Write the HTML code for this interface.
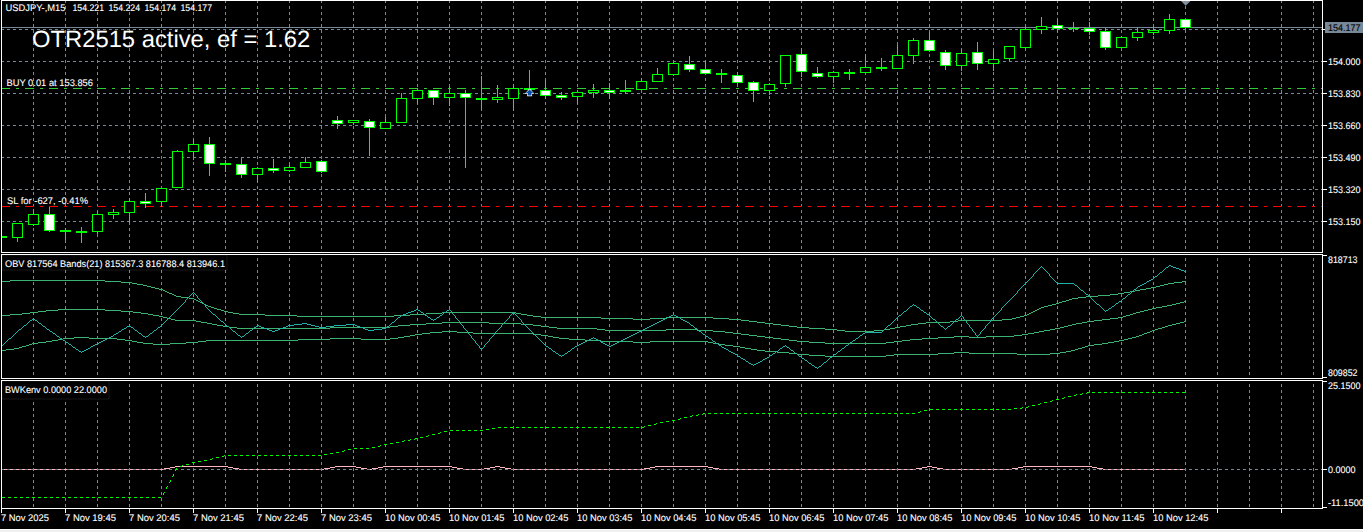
<!DOCTYPE html>
<html lang="en"><head><meta charset="utf-8"><title>USDJPY-,M15</title>
<style>
html,body{margin:0;padding:0;background:#000;overflow:hidden}
svg{display:block}
text{font-family:"Liberation Sans",Arial,sans-serif}
</style></head><body>
<svg width="1367" height="532" viewBox="0 0 1367 532" shape-rendering="crispEdges">
<rect x="0" y="0" width="1367" height="532" fill="#000"/>
<g id="grid-main">
<line x1="33.5" y1="0" x2="33.5" y2="252" stroke="#778899" stroke-dasharray="3 3" stroke-dashoffset="0"/>
<line x1="65.5" y1="0" x2="65.5" y2="252" stroke="#778899" stroke-dasharray="3 3" stroke-dashoffset="0"/>
<line x1="97.5" y1="0" x2="97.5" y2="252" stroke="#778899" stroke-dasharray="3 3" stroke-dashoffset="0"/>
<line x1="129.5" y1="0" x2="129.5" y2="252" stroke="#778899" stroke-dasharray="3 3" stroke-dashoffset="0"/>
<line x1="161.5" y1="0" x2="161.5" y2="252" stroke="#778899" stroke-dasharray="3 3" stroke-dashoffset="0"/>
<line x1="193.5" y1="0" x2="193.5" y2="252" stroke="#778899" stroke-dasharray="3 3" stroke-dashoffset="0"/>
<line x1="225.5" y1="0" x2="225.5" y2="252" stroke="#778899" stroke-dasharray="3 3" stroke-dashoffset="0"/>
<line x1="257.5" y1="0" x2="257.5" y2="252" stroke="#778899" stroke-dasharray="3 3" stroke-dashoffset="0"/>
<line x1="289.5" y1="0" x2="289.5" y2="252" stroke="#778899" stroke-dasharray="3 3" stroke-dashoffset="0"/>
<line x1="321.5" y1="0" x2="321.5" y2="252" stroke="#778899" stroke-dasharray="3 3" stroke-dashoffset="0"/>
<line x1="353.5" y1="0" x2="353.5" y2="252" stroke="#778899" stroke-dasharray="3 3" stroke-dashoffset="0"/>
<line x1="385.5" y1="0" x2="385.5" y2="252" stroke="#778899" stroke-dasharray="3 3" stroke-dashoffset="0"/>
<line x1="417.5" y1="0" x2="417.5" y2="252" stroke="#778899" stroke-dasharray="3 3" stroke-dashoffset="0"/>
<line x1="449.5" y1="0" x2="449.5" y2="252" stroke="#778899" stroke-dasharray="3 3" stroke-dashoffset="0"/>
<line x1="481.5" y1="0" x2="481.5" y2="252" stroke="#778899" stroke-dasharray="3 3" stroke-dashoffset="0"/>
<line x1="513.5" y1="0" x2="513.5" y2="252" stroke="#778899" stroke-dasharray="3 3" stroke-dashoffset="0"/>
<line x1="545.5" y1="0" x2="545.5" y2="252" stroke="#778899" stroke-dasharray="3 3" stroke-dashoffset="0"/>
<line x1="577.5" y1="0" x2="577.5" y2="252" stroke="#778899" stroke-dasharray="3 3" stroke-dashoffset="0"/>
<line x1="609.5" y1="0" x2="609.5" y2="252" stroke="#778899" stroke-dasharray="3 3" stroke-dashoffset="0"/>
<line x1="641.5" y1="0" x2="641.5" y2="252" stroke="#778899" stroke-dasharray="3 3" stroke-dashoffset="0"/>
<line x1="673.5" y1="0" x2="673.5" y2="252" stroke="#778899" stroke-dasharray="3 3" stroke-dashoffset="0"/>
<line x1="705.5" y1="0" x2="705.5" y2="252" stroke="#778899" stroke-dasharray="3 3" stroke-dashoffset="0"/>
<line x1="737.5" y1="0" x2="737.5" y2="252" stroke="#778899" stroke-dasharray="3 3" stroke-dashoffset="0"/>
<line x1="769.5" y1="0" x2="769.5" y2="252" stroke="#778899" stroke-dasharray="3 3" stroke-dashoffset="0"/>
<line x1="801.5" y1="0" x2="801.5" y2="252" stroke="#778899" stroke-dasharray="3 3" stroke-dashoffset="0"/>
<line x1="833.5" y1="0" x2="833.5" y2="252" stroke="#778899" stroke-dasharray="3 3" stroke-dashoffset="0"/>
<line x1="865.5" y1="0" x2="865.5" y2="252" stroke="#778899" stroke-dasharray="3 3" stroke-dashoffset="0"/>
<line x1="897.5" y1="0" x2="897.5" y2="252" stroke="#778899" stroke-dasharray="3 3" stroke-dashoffset="0"/>
<line x1="929.5" y1="0" x2="929.5" y2="252" stroke="#778899" stroke-dasharray="3 3" stroke-dashoffset="0"/>
<line x1="961.5" y1="0" x2="961.5" y2="252" stroke="#778899" stroke-dasharray="3 3" stroke-dashoffset="0"/>
<line x1="993.5" y1="0" x2="993.5" y2="252" stroke="#778899" stroke-dasharray="3 3" stroke-dashoffset="0"/>
<line x1="1025.5" y1="0" x2="1025.5" y2="252" stroke="#778899" stroke-dasharray="3 3" stroke-dashoffset="0"/>
<line x1="1057.5" y1="0" x2="1057.5" y2="252" stroke="#778899" stroke-dasharray="3 3" stroke-dashoffset="0"/>
<line x1="1089.5" y1="0" x2="1089.5" y2="252" stroke="#778899" stroke-dasharray="3 3" stroke-dashoffset="0"/>
<line x1="1121.5" y1="0" x2="1121.5" y2="252" stroke="#778899" stroke-dasharray="3 3" stroke-dashoffset="0"/>
<line x1="1153.5" y1="0" x2="1153.5" y2="252" stroke="#778899" stroke-dasharray="3 3" stroke-dashoffset="0"/>
<line x1="1185.5" y1="0" x2="1185.5" y2="252" stroke="#778899" stroke-dasharray="3 3" stroke-dashoffset="0"/>
<line x1="1217.5" y1="0" x2="1217.5" y2="252" stroke="#778899" stroke-dasharray="3 3" stroke-dashoffset="0"/>
<line x1="1249.5" y1="0" x2="1249.5" y2="252" stroke="#778899" stroke-dasharray="3 3" stroke-dashoffset="0"/>
<line x1="1281.5" y1="0" x2="1281.5" y2="252" stroke="#778899" stroke-dasharray="3 3" stroke-dashoffset="0"/>
<line x1="1313.5" y1="0" x2="1313.5" y2="252" stroke="#778899" stroke-dasharray="3 3" stroke-dashoffset="0"/>
<line x1="1" y1="29.5" x2="1322" y2="29.5" stroke="#778899" stroke-dasharray="3 3" stroke-dashoffset="0"/>
<line x1="1" y1="61.5" x2="1322" y2="61.5" stroke="#778899" stroke-dasharray="3 3" stroke-dashoffset="0"/>
<line x1="1" y1="93.5" x2="1322" y2="93.5" stroke="#778899" stroke-dasharray="3 3" stroke-dashoffset="0"/>
<line x1="1" y1="125.5" x2="1322" y2="125.5" stroke="#778899" stroke-dasharray="3 3" stroke-dashoffset="0"/>
<line x1="1" y1="157.5" x2="1322" y2="157.5" stroke="#778899" stroke-dasharray="3 3" stroke-dashoffset="0"/>
<line x1="1" y1="189.5" x2="1322" y2="189.5" stroke="#778899" stroke-dasharray="3 3" stroke-dashoffset="0"/>
<line x1="1" y1="221.5" x2="1322" y2="221.5" stroke="#778899" stroke-dasharray="3 3" stroke-dashoffset="0"/>
</g>
<rect x="2" y="27" width="1320" height="1" fill="#778899"/>
<line x1="1" y1="88.5" x2="1322" y2="88.5" stroke="#32cd32" stroke-dasharray="9 6 3 6" stroke-dashoffset="0"/>
<line x1="1" y1="206.5" x2="1322" y2="206.5" stroke="#ff0000" stroke-dasharray="9 6 3 6" stroke-dashoffset="0"/>
<g id="candles">
<rect x="2" y="236" width="5" height="2" fill="#00ff00"/>
<rect x="17" y="223" width="1" height="19" fill="#00ff00"/>
<rect x="12" y="223" width="11" height="15" fill="#00ff00"/>
<rect x="13" y="224" width="9" height="13" fill="#000"/>
<rect x="33" y="209" width="1" height="17" fill="#00ff00"/>
<rect x="28" y="214" width="11" height="11" fill="#00ff00"/>
<rect x="29" y="215" width="9" height="9" fill="#000"/>
<rect x="49" y="207" width="1" height="25" fill="#00ff00"/>
<rect x="44" y="214" width="11" height="17" fill="#00ff00"/>
<rect x="45" y="215" width="9" height="15" fill="#fff"/>
<rect x="65" y="228" width="1" height="12" fill="#00ff00"/>
<rect x="60" y="230" width="11" height="2" fill="#00ff00"/>
<rect x="81" y="227" width="1" height="16" fill="#00ff00"/>
<rect x="76" y="231" width="11" height="2" fill="#00ff00"/>
<rect x="97" y="211" width="1" height="23" fill="#00ff00"/>
<rect x="92" y="214" width="11" height="18" fill="#00ff00"/>
<rect x="93" y="215" width="9" height="16" fill="#000"/>
<rect x="113" y="209" width="1" height="10" fill="#00ff00"/>
<rect x="108" y="212" width="11" height="3" fill="#00ff00"/>
<rect x="109" y="213" width="9" height="1" fill="#000"/>
<rect x="129" y="198" width="1" height="25" fill="#00ff00"/>
<rect x="124" y="201" width="11" height="12" fill="#00ff00"/>
<rect x="125" y="202" width="9" height="10" fill="#000"/>
<rect x="145" y="193" width="1" height="15" fill="#00ff00"/>
<rect x="140" y="201" width="11" height="3" fill="#00ff00"/>
<rect x="141" y="202" width="9" height="1" fill="#fff"/>
<rect x="161" y="188" width="1" height="19" fill="#00ff00"/>
<rect x="156" y="188" width="11" height="14" fill="#00ff00"/>
<rect x="157" y="189" width="9" height="12" fill="#000"/>
<rect x="177" y="150" width="1" height="38" fill="#00ff00"/>
<rect x="172" y="151" width="11" height="37" fill="#00ff00"/>
<rect x="173" y="152" width="9" height="35" fill="#000"/>
<rect x="193" y="139" width="1" height="21" fill="#00ff00"/>
<rect x="188" y="144" width="11" height="8" fill="#00ff00"/>
<rect x="189" y="145" width="9" height="6" fill="#000"/>
<rect x="209" y="137" width="1" height="39" fill="#00ff00"/>
<rect x="204" y="144" width="11" height="20" fill="#00ff00"/>
<rect x="205" y="145" width="9" height="18" fill="#fff"/>
<rect x="225" y="160" width="1" height="12" fill="#00ff00"/>
<rect x="220" y="163" width="11" height="2" fill="#00ff00"/>
<rect x="241" y="158" width="1" height="20" fill="#00ff00"/>
<rect x="236" y="164" width="11" height="11" fill="#00ff00"/>
<rect x="237" y="165" width="9" height="9" fill="#fff"/>
<rect x="257" y="167" width="1" height="15" fill="#00ff00"/>
<rect x="252" y="168" width="11" height="7" fill="#00ff00"/>
<rect x="253" y="169" width="9" height="5" fill="#000"/>
<rect x="273" y="159" width="1" height="14" fill="#00ff00"/>
<rect x="268" y="168" width="11" height="3" fill="#00ff00"/>
<rect x="269" y="169" width="9" height="1" fill="#fff"/>
<rect x="289" y="165" width="1" height="7" fill="#00ff00"/>
<rect x="284" y="167" width="11" height="4" fill="#00ff00"/>
<rect x="285" y="168" width="9" height="2" fill="#000"/>
<rect x="305" y="157" width="1" height="11" fill="#00ff00"/>
<rect x="300" y="162" width="11" height="6" fill="#00ff00"/>
<rect x="301" y="163" width="9" height="4" fill="#000"/>
<rect x="321" y="160" width="1" height="13" fill="#00ff00"/>
<rect x="316" y="161" width="11" height="11" fill="#00ff00"/>
<rect x="317" y="162" width="9" height="9" fill="#fff"/>
<rect x="337" y="116" width="1" height="13" fill="#00ff00"/>
<rect x="332" y="120" width="11" height="4" fill="#00ff00"/>
<rect x="333" y="121" width="9" height="2" fill="#fff"/>
<rect x="353" y="120" width="1" height="5" fill="#00ff00"/>
<rect x="348" y="120" width="11" height="3" fill="#00ff00"/>
<rect x="349" y="121" width="9" height="1" fill="#000"/>
<rect x="369" y="119" width="1" height="37" fill="#00ff00"/>
<rect x="364" y="121" width="11" height="7" fill="#00ff00"/>
<rect x="365" y="122" width="9" height="5" fill="#fff"/>
<rect x="385" y="117" width="1" height="12" fill="#00ff00"/>
<rect x="380" y="122" width="11" height="7" fill="#00ff00"/>
<rect x="381" y="123" width="9" height="5" fill="#000"/>
<rect x="401" y="93" width="1" height="30" fill="#00ff00"/>
<rect x="396" y="98" width="11" height="25" fill="#00ff00"/>
<rect x="397" y="99" width="9" height="23" fill="#000"/>
<rect x="417" y="89" width="1" height="15" fill="#00ff00"/>
<rect x="412" y="90" width="11" height="9" fill="#00ff00"/>
<rect x="413" y="91" width="9" height="7" fill="#000"/>
<rect x="433" y="90" width="1" height="15" fill="#00ff00"/>
<rect x="428" y="90" width="11" height="8" fill="#00ff00"/>
<rect x="429" y="91" width="9" height="6" fill="#fff"/>
<rect x="449" y="86" width="1" height="20" fill="#00ff00"/>
<rect x="444" y="93" width="11" height="5" fill="#00ff00"/>
<rect x="445" y="94" width="9" height="3" fill="#000"/>
<rect x="465" y="90" width="1" height="78" fill="#00ff00"/>
<rect x="460" y="93" width="11" height="5" fill="#00ff00"/>
<rect x="461" y="94" width="9" height="3" fill="#fff"/>
<rect x="481" y="76" width="1" height="33" fill="#00ff00"/>
<rect x="476" y="98" width="11" height="2" fill="#00ff00"/>
<rect x="497" y="85" width="1" height="18" fill="#00ff00"/>
<rect x="492" y="97" width="11" height="3" fill="#00ff00"/>
<rect x="493" y="98" width="9" height="1" fill="#000"/>
<rect x="513" y="84" width="1" height="27" fill="#00ff00"/>
<rect x="508" y="88" width="11" height="11" fill="#00ff00"/>
<rect x="509" y="89" width="9" height="9" fill="#000"/>
<rect x="529" y="70" width="1" height="20" fill="#00ff00"/>
<rect x="524" y="88" width="11" height="2" fill="#00ff00"/>
<rect x="545" y="80" width="1" height="19" fill="#00ff00"/>
<rect x="540" y="90" width="11" height="6" fill="#00ff00"/>
<rect x="541" y="91" width="9" height="4" fill="#fff"/>
<rect x="561" y="92" width="1" height="8" fill="#00ff00"/>
<rect x="556" y="95" width="11" height="3" fill="#00ff00"/>
<rect x="557" y="96" width="9" height="1" fill="#fff"/>
<rect x="577" y="90" width="1" height="14" fill="#00ff00"/>
<rect x="572" y="92" width="11" height="5" fill="#00ff00"/>
<rect x="573" y="93" width="9" height="3" fill="#000"/>
<rect x="593" y="84" width="1" height="14" fill="#00ff00"/>
<rect x="588" y="90" width="11" height="3" fill="#00ff00"/>
<rect x="589" y="91" width="9" height="1" fill="#000"/>
<rect x="609" y="83" width="1" height="16" fill="#00ff00"/>
<rect x="604" y="90" width="11" height="3" fill="#00ff00"/>
<rect x="605" y="91" width="9" height="1" fill="#fff"/>
<rect x="625" y="80" width="1" height="14" fill="#00ff00"/>
<rect x="620" y="90" width="11" height="2" fill="#00ff00"/>
<rect x="641" y="78" width="1" height="12" fill="#00ff00"/>
<rect x="636" y="81" width="11" height="9" fill="#00ff00"/>
<rect x="637" y="82" width="9" height="7" fill="#000"/>
<rect x="657" y="68" width="1" height="14" fill="#00ff00"/>
<rect x="652" y="74" width="11" height="8" fill="#00ff00"/>
<rect x="653" y="75" width="9" height="6" fill="#000"/>
<rect x="673" y="62" width="1" height="14" fill="#00ff00"/>
<rect x="668" y="63" width="11" height="12" fill="#00ff00"/>
<rect x="669" y="64" width="9" height="10" fill="#000"/>
<rect x="689" y="56" width="1" height="16" fill="#00ff00"/>
<rect x="684" y="64" width="11" height="6" fill="#00ff00"/>
<rect x="685" y="65" width="9" height="4" fill="#fff"/>
<rect x="705" y="61" width="1" height="13" fill="#00ff00"/>
<rect x="700" y="69" width="11" height="5" fill="#00ff00"/>
<rect x="701" y="70" width="9" height="3" fill="#fff"/>
<rect x="721" y="69" width="1" height="14" fill="#00ff00"/>
<rect x="716" y="73" width="11" height="2" fill="#00ff00"/>
<rect x="737" y="72" width="1" height="12" fill="#00ff00"/>
<rect x="732" y="75" width="11" height="8" fill="#00ff00"/>
<rect x="733" y="76" width="9" height="6" fill="#fff"/>
<rect x="753" y="81" width="1" height="21" fill="#00ff00"/>
<rect x="748" y="82" width="11" height="9" fill="#00ff00"/>
<rect x="749" y="83" width="9" height="7" fill="#fff"/>
<rect x="769" y="83" width="1" height="12" fill="#00ff00"/>
<rect x="764" y="84" width="11" height="7" fill="#00ff00"/>
<rect x="765" y="85" width="9" height="5" fill="#000"/>
<rect x="785" y="55" width="1" height="32" fill="#00ff00"/>
<rect x="780" y="55" width="11" height="29" fill="#00ff00"/>
<rect x="781" y="56" width="9" height="27" fill="#000"/>
<rect x="801" y="48" width="1" height="29" fill="#00ff00"/>
<rect x="796" y="54" width="11" height="18" fill="#00ff00"/>
<rect x="797" y="55" width="9" height="16" fill="#fff"/>
<rect x="817" y="67" width="1" height="11" fill="#00ff00"/>
<rect x="812" y="73" width="11" height="4" fill="#00ff00"/>
<rect x="813" y="74" width="9" height="2" fill="#fff"/>
<rect x="833" y="71" width="1" height="12" fill="#00ff00"/>
<rect x="828" y="72" width="11" height="5" fill="#00ff00"/>
<rect x="829" y="73" width="9" height="3" fill="#000"/>
<rect x="849" y="69" width="1" height="11" fill="#00ff00"/>
<rect x="844" y="72" width="11" height="2" fill="#00ff00"/>
<rect x="865" y="54" width="1" height="19" fill="#00ff00"/>
<rect x="860" y="67" width="11" height="6" fill="#00ff00"/>
<rect x="861" y="68" width="9" height="4" fill="#000"/>
<rect x="881" y="58" width="1" height="13" fill="#00ff00"/>
<rect x="876" y="67" width="11" height="2" fill="#00ff00"/>
<rect x="897" y="45" width="1" height="24" fill="#00ff00"/>
<rect x="892" y="55" width="11" height="14" fill="#00ff00"/>
<rect x="893" y="56" width="9" height="12" fill="#000"/>
<rect x="913" y="38" width="1" height="26" fill="#00ff00"/>
<rect x="908" y="40" width="11" height="16" fill="#00ff00"/>
<rect x="909" y="41" width="9" height="14" fill="#000"/>
<rect x="929" y="32" width="1" height="20" fill="#00ff00"/>
<rect x="924" y="40" width="11" height="11" fill="#00ff00"/>
<rect x="925" y="41" width="9" height="9" fill="#fff"/>
<rect x="945" y="50" width="1" height="20" fill="#00ff00"/>
<rect x="940" y="52" width="11" height="14" fill="#00ff00"/>
<rect x="941" y="53" width="9" height="12" fill="#fff"/>
<rect x="961" y="49" width="1" height="22" fill="#00ff00"/>
<rect x="956" y="53" width="11" height="13" fill="#00ff00"/>
<rect x="957" y="54" width="9" height="11" fill="#000"/>
<rect x="977" y="42" width="1" height="28" fill="#00ff00"/>
<rect x="972" y="52" width="11" height="12" fill="#00ff00"/>
<rect x="973" y="53" width="9" height="10" fill="#fff"/>
<rect x="993" y="51" width="1" height="20" fill="#00ff00"/>
<rect x="988" y="59" width="11" height="5" fill="#00ff00"/>
<rect x="989" y="60" width="9" height="3" fill="#000"/>
<rect x="1009" y="46" width="1" height="15" fill="#00ff00"/>
<rect x="1004" y="46" width="11" height="13" fill="#00ff00"/>
<rect x="1005" y="47" width="9" height="11" fill="#000"/>
<rect x="1025" y="27" width="1" height="22" fill="#00ff00"/>
<rect x="1020" y="29" width="11" height="19" fill="#00ff00"/>
<rect x="1021" y="30" width="9" height="17" fill="#000"/>
<rect x="1041" y="17" width="1" height="17" fill="#00ff00"/>
<rect x="1036" y="26" width="11" height="4" fill="#00ff00"/>
<rect x="1037" y="27" width="9" height="2" fill="#000"/>
<rect x="1057" y="19" width="1" height="13" fill="#00ff00"/>
<rect x="1052" y="25" width="11" height="4" fill="#00ff00"/>
<rect x="1053" y="26" width="9" height="2" fill="#fff"/>
<rect x="1073" y="22" width="1" height="10" fill="#00ff00"/>
<rect x="1068" y="28" width="11" height="1" fill="#00ff00"/>
<rect x="1089" y="22" width="1" height="13" fill="#00ff00"/>
<rect x="1084" y="28" width="11" height="4" fill="#00ff00"/>
<rect x="1085" y="29" width="9" height="2" fill="#fff"/>
<rect x="1105" y="28" width="1" height="22" fill="#00ff00"/>
<rect x="1100" y="31" width="11" height="17" fill="#00ff00"/>
<rect x="1101" y="32" width="9" height="15" fill="#fff"/>
<rect x="1121" y="36" width="1" height="12" fill="#00ff00"/>
<rect x="1116" y="37" width="11" height="11" fill="#00ff00"/>
<rect x="1117" y="38" width="9" height="9" fill="#000"/>
<rect x="1137" y="28" width="1" height="13" fill="#00ff00"/>
<rect x="1132" y="32" width="11" height="6" fill="#00ff00"/>
<rect x="1133" y="33" width="9" height="4" fill="#000"/>
<rect x="1153" y="27" width="1" height="8" fill="#00ff00"/>
<rect x="1148" y="30" width="11" height="3" fill="#00ff00"/>
<rect x="1149" y="31" width="9" height="1" fill="#000"/>
<rect x="1169" y="14" width="1" height="20" fill="#00ff00"/>
<rect x="1164" y="19" width="11" height="12" fill="#00ff00"/>
<rect x="1165" y="20" width="9" height="10" fill="#000"/>
<rect x="1185" y="19" width="1" height="10" fill="#00ff00"/>
<rect x="1180" y="19" width="11" height="9" fill="#00ff00"/>
<rect x="1181" y="20" width="9" height="7" fill="#fff"/>
</g>
<g id="arrow">
<path d="M529.6 88.2 L534.4 93.7 L532.1 93.7 L532.1 96.3 L527.1 96.3 L527.1 93.7 L524.8 93.7 Z" fill="#fff" shape-rendering="auto"/>
<path d="M529.6 89.6 L533.3 93 L531.5 93 L531.5 95.4 L527.7 95.4 L527.7 93 L525.9 93 Z" fill="#0a50a8" shape-rendering="auto"/>
</g>
<path d="M1181 1 L1190.5 1 L1185.7 5.8 Z" fill="#8390a0" shape-rendering="auto"/>
<g id="grid-obv">
<line x1="33.5" y1="270" x2="33.5" y2="378" stroke="#778899" stroke-dasharray="3 3" stroke-dashoffset="0"/>
<line x1="65.5" y1="270" x2="65.5" y2="378" stroke="#778899" stroke-dasharray="3 3" stroke-dashoffset="0"/>
<line x1="97.5" y1="270" x2="97.5" y2="378" stroke="#778899" stroke-dasharray="3 3" stroke-dashoffset="0"/>
<line x1="129.5" y1="270" x2="129.5" y2="378" stroke="#778899" stroke-dasharray="3 3" stroke-dashoffset="0"/>
<line x1="161.5" y1="270" x2="161.5" y2="378" stroke="#778899" stroke-dasharray="3 3" stroke-dashoffset="0"/>
<line x1="193.5" y1="270" x2="193.5" y2="378" stroke="#778899" stroke-dasharray="3 3" stroke-dashoffset="0"/>
<line x1="225.5" y1="270" x2="225.5" y2="378" stroke="#778899" stroke-dasharray="3 3" stroke-dashoffset="0"/>
<line x1="257.5" y1="258" x2="257.5" y2="378" stroke="#778899" stroke-dasharray="3 3" stroke-dashoffset="0"/>
<line x1="289.5" y1="258" x2="289.5" y2="378" stroke="#778899" stroke-dasharray="3 3" stroke-dashoffset="0"/>
<line x1="321.5" y1="258" x2="321.5" y2="378" stroke="#778899" stroke-dasharray="3 3" stroke-dashoffset="0"/>
<line x1="353.5" y1="258" x2="353.5" y2="378" stroke="#778899" stroke-dasharray="3 3" stroke-dashoffset="0"/>
<line x1="385.5" y1="258" x2="385.5" y2="378" stroke="#778899" stroke-dasharray="3 3" stroke-dashoffset="0"/>
<line x1="417.5" y1="258" x2="417.5" y2="378" stroke="#778899" stroke-dasharray="3 3" stroke-dashoffset="0"/>
<line x1="449.5" y1="258" x2="449.5" y2="378" stroke="#778899" stroke-dasharray="3 3" stroke-dashoffset="0"/>
<line x1="481.5" y1="258" x2="481.5" y2="378" stroke="#778899" stroke-dasharray="3 3" stroke-dashoffset="0"/>
<line x1="513.5" y1="258" x2="513.5" y2="378" stroke="#778899" stroke-dasharray="3 3" stroke-dashoffset="0"/>
<line x1="545.5" y1="258" x2="545.5" y2="378" stroke="#778899" stroke-dasharray="3 3" stroke-dashoffset="0"/>
<line x1="577.5" y1="258" x2="577.5" y2="378" stroke="#778899" stroke-dasharray="3 3" stroke-dashoffset="0"/>
<line x1="609.5" y1="258" x2="609.5" y2="378" stroke="#778899" stroke-dasharray="3 3" stroke-dashoffset="0"/>
<line x1="641.5" y1="258" x2="641.5" y2="378" stroke="#778899" stroke-dasharray="3 3" stroke-dashoffset="0"/>
<line x1="673.5" y1="258" x2="673.5" y2="378" stroke="#778899" stroke-dasharray="3 3" stroke-dashoffset="0"/>
<line x1="705.5" y1="258" x2="705.5" y2="378" stroke="#778899" stroke-dasharray="3 3" stroke-dashoffset="0"/>
<line x1="737.5" y1="258" x2="737.5" y2="378" stroke="#778899" stroke-dasharray="3 3" stroke-dashoffset="0"/>
<line x1="769.5" y1="258" x2="769.5" y2="378" stroke="#778899" stroke-dasharray="3 3" stroke-dashoffset="0"/>
<line x1="801.5" y1="258" x2="801.5" y2="378" stroke="#778899" stroke-dasharray="3 3" stroke-dashoffset="0"/>
<line x1="833.5" y1="258" x2="833.5" y2="378" stroke="#778899" stroke-dasharray="3 3" stroke-dashoffset="0"/>
<line x1="865.5" y1="258" x2="865.5" y2="378" stroke="#778899" stroke-dasharray="3 3" stroke-dashoffset="0"/>
<line x1="897.5" y1="258" x2="897.5" y2="378" stroke="#778899" stroke-dasharray="3 3" stroke-dashoffset="0"/>
<line x1="929.5" y1="258" x2="929.5" y2="378" stroke="#778899" stroke-dasharray="3 3" stroke-dashoffset="0"/>
<line x1="961.5" y1="258" x2="961.5" y2="378" stroke="#778899" stroke-dasharray="3 3" stroke-dashoffset="0"/>
<line x1="993.5" y1="258" x2="993.5" y2="378" stroke="#778899" stroke-dasharray="3 3" stroke-dashoffset="0"/>
<line x1="1025.5" y1="258" x2="1025.5" y2="378" stroke="#778899" stroke-dasharray="3 3" stroke-dashoffset="0"/>
<line x1="1057.5" y1="258" x2="1057.5" y2="378" stroke="#778899" stroke-dasharray="3 3" stroke-dashoffset="0"/>
<line x1="1089.5" y1="258" x2="1089.5" y2="378" stroke="#778899" stroke-dasharray="3 3" stroke-dashoffset="0"/>
<line x1="1121.5" y1="258" x2="1121.5" y2="378" stroke="#778899" stroke-dasharray="3 3" stroke-dashoffset="0"/>
<line x1="1153.5" y1="258" x2="1153.5" y2="378" stroke="#778899" stroke-dasharray="3 3" stroke-dashoffset="0"/>
<line x1="1185.5" y1="258" x2="1185.5" y2="378" stroke="#778899" stroke-dasharray="3 3" stroke-dashoffset="0"/>
<line x1="1217.5" y1="258" x2="1217.5" y2="378" stroke="#778899" stroke-dasharray="3 3" stroke-dashoffset="0"/>
<line x1="1249.5" y1="258" x2="1249.5" y2="378" stroke="#778899" stroke-dasharray="3 3" stroke-dashoffset="0"/>
<line x1="1281.5" y1="258" x2="1281.5" y2="378" stroke="#778899" stroke-dasharray="3 3" stroke-dashoffset="0"/>
<line x1="1313.5" y1="258" x2="1313.5" y2="378" stroke="#778899" stroke-dasharray="3 3" stroke-dashoffset="0"/>
</g>
<g id="obv">
<path d="M2 281.5h8M10 280.5h95M105 281.5h16M121 282.5h11M132 283.5h5M137 284.5h6M143 285.5h4M147 286.5h4M151 287.5h4M155 288.5h4M159 289.5h4M163 290.5h2M165 291.5h2M167 292.5h2M169 293.5h3M172 294.5h2M174 295.5h2M176 296.5h5M181 297.5h8M189 298.5h5M194 299.5h2M196 300.5h2M198 301.5h2M200 302.5h2M202 303.5h2M204 304.5h2M206 305.5h2M208 306.5h3M211 307.5h3M214 308.5h3M217 309.5h4M221 310.5h3M224 311.5h4M228 312.5h5M233 313.5h6M239 314.5h26M265 315.5h32M297 316.5h97M394 315.5h16M410 314.5h16M426 313.5h16M442 312.5h74M516 313.5h5M521 314.5h6M527 315.5h6M533 316.5h8M541 317.5h60M601 318.5h32M633 319.5h17M650 318.5h16M666 317.5h47M713 318.5h16M729 319.5h12M741 320.5h8M749 321.5h8M757 322.5h8M765 323.5h8M773 324.5h8M781 325.5h8M789 326.5h8M797 327.5h12M809 328.5h16M825 329.5h12M837 330.5h8M845 331.5h29M874 330.5h10M884 329.5h6M890 328.5h5M895 327.5h5M900 326.5h6M906 325.5h5M911 324.5h7M918 323.5h8M926 322.5h24M950 321.5h8M958 320.5h44M1002 319.5h10M1012 318.5h4M1016 317.5h4M1020 316.5h4M1024 315.5h3M1027 314.5h2M1029 313.5h2M1031 312.5h2M1033 311.5h2M1035 310.5h2M1037 309.5h2M1039 308.5h2M1041 307.5h3M1044 306.5h4M1048 305.5h4M1052 304.5h4M1056 303.5h3M1059 302.5h3M1062 301.5h4M1066 300.5h3M1069 299.5h3M1072 298.5h6M1078 297.5h8M1086 296.5h12M1098 295.5h12M1110 294.5h8M1118 293.5h6M1124 292.5h6M1130 291.5h5M1135 290.5h5M1140 289.5h6M1146 288.5h5M1151 287.5h5M1156 286.5h4M1160 285.5h4M1164 284.5h4M1168 283.5h6M1174 282.5h8M1182 281.5h4" fill="none" stroke="#3cb371" stroke-width="1"/>
<path d="M2 315.5h8M10 314.5h12M22 313.5h8M30 312.5h8M38 311.5h8M46 310.5h12M58 309.5h47M105 310.5h16M121 311.5h12M133 312.5h8M141 313.5h7M148 314.5h5M153 315.5h6M159 316.5h4M163 317.5h4M167 318.5h4M171 319.5h4M175 320.5h21M196 321.5h5M201 322.5h6M207 323.5h5M212 324.5h5M217 325.5h6M223 326.5h6M229 327.5h8M237 328.5h93M330 327.5h60M390 326.5h8M398 325.5h12M410 324.5h16M426 323.5h16M442 322.5h47M489 323.5h32M521 324.5h12M533 325.5h8M541 326.5h8M549 327.5h8M557 328.5h40M597 329.5h8M605 330.5h61M666 329.5h31M697 330.5h16M713 331.5h12M725 332.5h8M733 333.5h8M741 334.5h8M749 335.5h8M757 336.5h8M765 337.5h8M773 338.5h8M781 339.5h8M789 340.5h8M797 341.5h12M809 342.5h16M825 343.5h61M886 342.5h8M894 341.5h8M902 340.5h8M910 339.5h12M922 338.5h16M938 337.5h16M954 336.5h15M969 337.5h17M986 336.5h28M1014 335.5h8M1022 334.5h6M1028 333.5h6M1034 332.5h5M1039 331.5h5M1044 330.5h6M1050 329.5h5M1055 328.5h5M1060 327.5h4M1064 326.5h4M1068 325.5h4M1072 324.5h4M1076 323.5h6M1082 322.5h5M1087 321.5h7M1094 320.5h8M1102 319.5h8M1110 318.5h8M1118 317.5h5M1123 316.5h3M1126 315.5h4M1130 314.5h3M1133 313.5h3M1136 312.5h4M1140 311.5h4M1144 310.5h4M1148 309.5h4M1152 308.5h4M1156 307.5h6M1162 306.5h5M1167 305.5h5M1172 304.5h4M1176 303.5h4M1180 302.5h4M1184 301.5h2" fill="none" stroke="#3cb371" stroke-width="1"/>
<path d="M2 350.5h4M6 349.5h8M14 348.5h5M19 347.5h3M22 346.5h4M26 345.5h3M29 344.5h3M32 343.5h6M38 342.5h8M46 341.5h6M52 340.5h6M58 339.5h5M63 338.5h11M74 337.5h15M89 338.5h28M117 339.5h8M125 340.5h7M132 341.5h5M137 342.5h6M143 343.5h10M153 344.5h17M170 343.5h16M186 342.5h12M198 341.5h8M206 340.5h92M298 339.5h32M330 338.5h31M361 339.5h29M390 338.5h8M398 337.5h6M404 336.5h6M410 335.5h5M415 334.5h7M422 333.5h8M430 332.5h12M442 331.5h15M457 332.5h16M473 333.5h60M533 334.5h8M541 335.5h7M548 336.5h5M553 337.5h6M559 338.5h10M569 339.5h16M585 340.5h16M601 341.5h32M633 342.5h17M650 341.5h58M708 342.5h5M713 343.5h6M719 344.5h6M725 345.5h8M733 346.5h7M740 347.5h5M745 348.5h6M751 349.5h6M757 350.5h8M765 351.5h12M777 352.5h12M789 353.5h8M797 354.5h12M809 355.5h16M825 356.5h61M886 355.5h8M894 354.5h44M938 353.5h16M954 352.5h15M969 353.5h48M1017 354.5h33M1050 353.5h10M1060 352.5h6M1066 351.5h5M1071 350.5h4M1075 349.5h3M1078 348.5h4M1082 347.5h3M1085 346.5h3M1088 345.5h6M1094 344.5h8M1102 343.5h6M1108 342.5h6M1114 341.5h5M1119 340.5h5M1124 339.5h4M1128 338.5h4M1132 337.5h4M1136 336.5h3M1139 335.5h3M1142 334.5h2M1144 333.5h3M1147 332.5h3M1150 331.5h2M1152 330.5h3M1155 329.5h3M1158 328.5h4M1162 327.5h3M1165 326.5h3M1168 325.5h4M1172 324.5h4M1176 323.5h4M1180 322.5h4M1184 321.5h2" fill="none" stroke="#3cb371" stroke-width="1"/>
<path d="M2.5 345v1M3.5 344v1M4.5 343v1M5.5 342v1M6.5 341v1M7.5 340v1M8.5 339v1M9 338.5h2M11.5 337v1M12.5 336v1M13.5 335v1M14.5 334v1M15.5 333v1M16.5 332v1M17.5 331v1M18.5 330v1M19 329.5h2M21.5 328v1M22.5 327v1M23.5 326v1M24 325.5h2M26.5 324v1M27.5 323v1M28.5 322v1M29.5 321v1M30 320.5h2M32.5 319v1M33.5 318v1M34.5 319v1M35 320.5h2M37.5 321v1M38.5 322v1M39 323.5h2M41.5 324v1M42.5 325v1M43 326.5h2M45.5 327v1M46.5 328v1M47 329.5h2M49.5 330v1M50 331.5h2M52.5 332v1M53 333.5h2M55.5 334v1M56.5 335v1M57 336.5h2M59.5 337v1M60 338.5h2M62.5 339v1M63 340.5h2M65.5 341v1M66 342.5h2M68.5 343v1M69 344.5h2M71.5 345v1M72.5 346v1M73 347.5h2M75.5 348v1M76 349.5h2M78.5 350v1M79 351.5h2M81.5 352v1M82 351.5h2M84 350.5h2M86 349.5h2M88 348.5h2M90.5 347v1M91 346.5h2M93 345.5h2M95 344.5h2M97 343.5h2M99 342.5h2M101 341.5h2M103 340.5h2M105 339.5h2M107 338.5h2M109 337.5h2M111 336.5h2M113.5 335v1M114 334.5h2M116 333.5h2M118.5 332v1M119 331.5h2M121.5 330v1M122 329.5h2M124 328.5h2M126.5 327v1M127 326.5h2M129.5 325v1M130.5 326v1M131 327.5h2M133.5 328v1M134.5 329v1M135 330.5h2M137.5 331v1M138.5 332v1M139 333.5h2M141.5 334v1M142.5 335v1M143 336.5h2M145.5 337v1M146 336.5h2M148.5 335v1M149.5 334v1M150 333.5h2M152.5 332v1M153.5 331v1M154 330.5h2M156.5 329v1M157.5 328v1M158 327.5h2M160.5 326v1M161.5 325v1M162.5 324v1M163.5 323v1M164.5 322v1M165.5 321v1M166.5 320v1M167.5 319v1M168.5 318v1M169.5 317v1M170.5 316v1M171.5 315v1M172.5 314v1M173.5 313v1M174.5 312v1M175.5 311v1M176.5 310v1M177.5 309v1M178.5 308v1M179.5 307v1M180.5 306v1M181.5 305v1M182.5 304v1M183.5 303v1M184.5 302v1M185.5 300v2M186.5 299v1M187.5 298v1M188.5 297v1M189.5 296v1M190.5 295v1M191.5 294v1M192.5 293v1M193.5 292v1M194.5 293v1M195.5 294v1M196.5 295v1M197.5 296v2M198.5 298v1M199.5 299v1M200.5 300v1M201.5 301v1M202.5 302v1M203.5 303v1M204.5 304v1M205.5 305v2M206.5 307v1M207.5 308v1M208.5 309v1M209.5 310v1M210.5 311v1M211.5 312v1M212.5 313v1M213 314.5h2M215.5 315v1M216.5 316v1M217.5 317v1M218.5 318v1M219.5 319v1M220.5 320v1M221 321.5h2M223.5 322v1M224.5 323v1M225.5 324v1M226.5 325v1M227 326.5h2M229.5 327v1M230.5 328v1M231.5 329v1M232.5 330v1M233 331.5h2M235.5 332v1M236.5 333v1M237.5 334v1M238 335.5h2M240.5 336v1M241.5 337v1M242 336.5h2M244.5 335v1M245.5 334v1M246 333.5h2M248.5 332v1M249.5 331v1M250 330.5h2M252.5 329v1M253.5 328v1M254 327.5h2M256.5 326v1M257 325.5h2M259 326.5h2M261 327.5h3M264 328.5h3M267 329.5h2M269 330.5h3M272 331.5h3M275 330.5h3M278 329.5h2M280 328.5h3M283 327.5h3M286 326.5h2M288 325.5h6M294 324.5h8M302 323.5h5M307 324.5h4M311 325.5h4M315 326.5h4M319 327.5h7M326 326.5h8M334 325.5h12M346 324.5h9M355 325.5h2M357 326.5h3M360 327.5h3M363 328.5h2M365 329.5h3M368 330.5h6M374 329.5h8M382 328.5h4M386.5 327v1M387 326.5h2M389.5 325v1M390.5 324v1M391.5 323v1M392 322.5h2M394.5 321v1M395.5 320v1M396.5 319v1M397.5 318v1M398 317.5h2M400.5 316v1M401 315.5h2M403 314.5h3M406 313.5h2M408 312.5h3M411 311.5h3M414 310.5h2M416 309.5h2M418 310.5h2M420.5 311v1M421 312.5h2M423.5 313v1M424.5 314v1M425 315.5h2M427.5 316v1M428 317.5h2M430.5 318v1M431 319.5h2M433.5 320v1M434 319.5h2M436.5 318v1M437 317.5h2M439.5 316v1M440 315.5h2M442.5 314v1M443.5 313v1M444 312.5h2M446.5 311v1M447 310.5h2M449.5 309v1M450.5 310v1M451.5 311v2M452.5 313v1M453.5 314v1M454.5 315v1M455.5 316v2M456.5 318v1M457.5 319v1M458.5 320v1M459.5 321v2M460.5 323v1M461.5 324v1M462.5 325v1M463.5 326v2M464.5 328v1M465.5 329v1M466.5 330v1M467.5 331v2M468.5 333v1M469.5 334v1M470.5 335v1M471.5 336v2M472.5 338v1M473.5 339v1M474.5 340v1M475.5 341v2M476.5 343v1M477.5 344v1M478.5 345v1M479.5 346v2M480.5 348v1M481.5 349v1M482.5 348v1M483.5 347v1M484.5 345v2M485.5 344v1M486.5 343v1M487.5 342v1M488.5 341v1M489.5 339v2M490.5 338v1M491.5 337v1M492.5 336v1M493.5 335v1M494.5 333v2M495.5 332v1M496.5 331v1M497.5 330v1M498.5 329v1M499.5 328v1M500.5 327v1M501.5 325v2M502.5 324v1M503.5 323v1M504.5 322v1M505.5 321v1M506.5 320v1M507.5 319v1M508.5 318v1M509.5 316v2M510.5 315v1M511.5 314v1M512.5 313v1M513.5 312v1M514.5 313v1M515.5 314v1M516.5 315v1M517.5 316v1M518.5 317v1M519.5 318v1M520.5 319v1M521.5 320v2M522.5 322v1M523.5 323v1M524.5 324v1M525.5 325v1M526.5 326v1M527.5 327v1M528.5 328v1M529.5 329v1M530.5 330v1M531.5 331v1M532.5 332v1M533.5 333v1M534.5 334v1M535.5 335v1M536.5 336v1M537.5 337v1M538.5 338v1M539.5 339v1M540.5 340v1M541.5 341v1M542.5 342v1M543.5 343v1M544.5 344v1M545.5 345v1M546 346.5h2M548.5 347v1M549 348.5h2M551.5 349v1M552.5 350v1M553 351.5h2M555.5 352v1M556 353.5h2M558.5 354v1M559 355.5h2M561.5 356v1M562 355.5h2M564.5 354v1M565 353.5h2M567.5 352v1M568 351.5h2M570.5 350v1M571.5 349v1M572 348.5h2M574.5 347v1M575 346.5h2M577 345.5h2M579 344.5h2M581 343.5h2M583 342.5h2M585 341.5h2M587 340.5h2M589 339.5h2M591 338.5h2M593.5 337v1M594 338.5h2M596 339.5h2M598 340.5h2M600.5 341v1M601 342.5h2M603 343.5h2M605 344.5h2M607 345.5h2M609 346.5h2M611 345.5h2M613 344.5h2M615 343.5h2M617 342.5h2M619 341.5h2M621 340.5h2M623 339.5h2M625 338.5h2M627 337.5h2M629 336.5h2M631 335.5h2M633 334.5h2M635 333.5h2M637 332.5h2M639 331.5h2M641 330.5h2M643 329.5h2M645 328.5h2M647 327.5h2M649 326.5h2M651 325.5h2M653 324.5h2M655 323.5h2M657 322.5h2M659 321.5h2M661 320.5h2M663 319.5h2M665 318.5h2M667 317.5h2M669 316.5h2M671 315.5h2M673.5 314v1M674 315.5h2M676 316.5h2M678 317.5h2M680.5 318v1M681 319.5h2M683 320.5h2M685 321.5h2M687 322.5h2M689.5 323v1M690.5 324v1M691 325.5h2M693.5 326v1M694.5 327v1M695 328.5h2M697.5 329v1M698.5 330v1M699 331.5h2M701.5 332v1M702.5 333v1M703 334.5h2M705.5 335v1M706 336.5h2M708.5 337v1M709 338.5h2M711.5 339v1M712.5 340v1M713 341.5h2M715.5 342v1M716 343.5h2M718.5 344v1M719 345.5h2M721.5 346v1M722 347.5h2M724 348.5h2M726 349.5h2M728.5 350v1M729 351.5h2M731 352.5h2M733 353.5h2M735 354.5h2M737.5 355v1M738 356.5h2M740.5 357v1M741 358.5h2M743 359.5h2M745.5 360v1M746 361.5h2M748.5 362v1M749 363.5h2M751 364.5h2M753.5 365v1M754 364.5h2M756 363.5h2M758 362.5h2M760 361.5h2M762.5 360v1M763 359.5h2M765 358.5h2M767 357.5h2M769.5 356v1M770 355.5h2M772.5 354v1M773 353.5h2M775.5 352v1M776 351.5h2M778.5 350v1M779.5 349v1M780 348.5h2M782.5 347v1M783 346.5h2M785.5 345v1M786.5 346v1M787 347.5h2M789.5 348v1M790.5 349v1M791 350.5h2M793.5 351v1M794.5 352v1M795 353.5h2M797.5 354v1M798.5 355v1M799 356.5h2M801.5 357v1M802 358.5h2M804.5 359v1M805 360.5h2M807.5 361v1M808.5 362v1M809 363.5h2M811.5 364v1M812 365.5h2M814.5 366v1M815 367.5h2M817.5 368v1M818.5 367v1M819 366.5h2M821.5 365v1M822.5 364v1M823.5 363v1M824 362.5h2M826.5 361v1M827.5 360v1M828.5 359v1M829.5 358v1M830 357.5h2M832.5 356v1M833.5 355v1M834 354.5h2M836.5 353v1M837.5 352v1M838 351.5h2M840.5 350v1M841.5 349v1M842 348.5h2M844.5 347v1M845.5 346v1M846 345.5h2M848.5 344v1M849.5 343v1M850 342.5h2M852.5 341v1M853 340.5h2M855.5 339v1M856 338.5h2M858.5 337v1M859.5 336v1M860 335.5h2M862.5 334v1M863 333.5h2M865 332.5h17M882.5 331v1M883.5 330v1M884.5 329v1M885.5 328v1M886.5 327v1M887.5 326v1M888 325.5h2M890.5 324v1M891.5 323v1M892.5 322v1M893.5 321v1M894.5 320v1M895.5 319v1M896.5 318v1M897.5 317v1M898.5 316v1M899 315.5h2M901.5 314v1M902.5 313v1M903.5 312v1M904 311.5h2M906.5 310v1M907.5 309v1M908.5 308v1M909.5 307v1M910 306.5h2M912.5 305v1M913.5 304v1M914 305.5h2M916.5 306v1M917 307.5h2M919.5 308v1M920.5 309v1M921 310.5h2M923.5 311v1M924 312.5h2M926.5 313v1M927 314.5h2M929.5 315v1M930.5 316v1M931.5 317v1M932.5 318v1M933 319.5h2M935.5 320v1M936.5 321v1M937.5 322v1M938.5 323v1M939.5 324v1M940.5 325v1M941 326.5h2M943.5 327v1M944.5 328v1M945.5 329v1M946.5 328v1M947.5 327v1M948 326.5h2M950.5 325v1M951.5 324v1M952.5 323v1M953.5 322v1M954.5 321v1M955.5 320v1M956 319.5h2M958.5 318v1M959.5 317v1M960.5 316v1M961.5 315v1M962.5 316v1M963.5 317v2M964.5 319v1M965.5 320v1M966.5 321v2M967.5 323v1M968.5 324v1M969.5 325v2M970.5 327v1M971.5 328v1M972.5 329v2M973.5 331v1M974.5 332v1M975.5 333v2M976.5 335v1M977.5 336v1M978.5 335v1M979.5 334v1M980.5 332v2M981.5 331v1M982.5 330v1M983.5 329v1M984.5 328v1M985.5 326v2M986.5 325v1M987.5 324v1M988.5 323v1M989.5 322v1M990.5 320v2M991.5 319v1M992.5 318v1M993.5 317v1M994.5 316v1M995.5 315v1M996.5 314v1M997.5 313v1M998.5 312v1M999.5 311v1M1000.5 310v1M1001.5 308v2M1002.5 307v1M1003.5 306v1M1004.5 305v1M1005.5 304v1M1006.5 303v1M1007.5 302v1M1008.5 301v1M1009.5 300v1M1010.5 299v1M1011.5 298v1M1012.5 297v1M1013.5 296v1M1014.5 295v1M1015.5 294v1M1016.5 293v1M1017.5 291v2M1018.5 290v1M1019.5 289v1M1020.5 288v1M1021.5 287v1M1022.5 286v1M1023.5 285v1M1024.5 284v1M1025.5 283v1M1026.5 282v1M1027.5 281v1M1028.5 280v1M1029.5 279v1M1030.5 278v1M1031.5 277v1M1032.5 276v1M1033.5 274v2M1034.5 273v1M1035.5 272v1M1036.5 271v1M1037.5 270v1M1038.5 269v1M1039.5 268v1M1040.5 267v1M1041.5 266v1M1042.5 267v1M1043.5 268v1M1044.5 269v1M1045.5 270v1M1046.5 271v1M1047.5 272v1M1048.5 273v1M1049.5 274v2M1050.5 276v1M1051.5 277v1M1052.5 278v1M1053.5 279v1M1054.5 280v1M1055.5 281v1M1056.5 282v1M1057 283.5h17M1074.5 284v1M1075 285.5h2M1077.5 286v1M1078.5 287v1M1079.5 288v1M1080.5 289v1M1081 290.5h2M1083.5 291v1M1084.5 292v1M1085.5 293v1M1086 294.5h2M1088.5 295v1M1089.5 296v1M1090.5 297v1M1091.5 298v1M1092.5 299v1M1093.5 300v1M1094.5 301v1M1095.5 302v1M1096.5 303v1M1097 304.5h2M1099.5 305v1M1100.5 306v1M1101.5 307v1M1102.5 308v1M1103.5 309v1M1104.5 310v1M1105.5 311v1M1106 310.5h2M1108.5 309v1M1109 308.5h2M1111.5 307v1M1112 306.5h2M1114.5 305v1M1115.5 304v1M1116 303.5h2M1118.5 302v1M1119 301.5h2M1121.5 300v1M1122.5 299v1M1123 298.5h2M1125.5 297v1M1126.5 296v1M1127.5 295v1M1128 294.5h2M1130.5 293v1M1131.5 292v1M1132.5 291v1M1133.5 290v1M1134 289.5h2M1136.5 288v1M1137.5 287v1M1138 286.5h2M1140 285.5h2M1142 284.5h2M1144 283.5h2M1146.5 282v1M1147 281.5h2M1149 280.5h2M1151 279.5h2M1153.5 278v1M1154.5 277v1M1155 276.5h2M1157.5 275v1M1158.5 274v1M1159.5 273v1M1160 272.5h2M1162.5 271v1M1163.5 270v1M1164.5 269v1M1165.5 268v1M1166 267.5h2M1168.5 266v1M1169 265.5h2M1171 266.5h2M1173 267.5h3M1176 268.5h3M1179 269.5h2M1181 270.5h3M1184 271.5h2" fill="none" stroke="#20b2aa" stroke-width="1"/>
</g>
<g id="grid-bwk">
<line x1="33.5" y1="399" x2="33.5" y2="508" stroke="#778899" stroke-dasharray="3 3" stroke-dashoffset="3"/>
<line x1="65.5" y1="399" x2="65.5" y2="508" stroke="#778899" stroke-dasharray="3 3" stroke-dashoffset="3"/>
<line x1="97.5" y1="399" x2="97.5" y2="508" stroke="#778899" stroke-dasharray="3 3" stroke-dashoffset="3"/>
<line x1="129.5" y1="384" x2="129.5" y2="508" stroke="#778899" stroke-dasharray="3 3" stroke-dashoffset="0"/>
<line x1="161.5" y1="384" x2="161.5" y2="508" stroke="#778899" stroke-dasharray="3 3" stroke-dashoffset="0"/>
<line x1="193.5" y1="384" x2="193.5" y2="508" stroke="#778899" stroke-dasharray="3 3" stroke-dashoffset="0"/>
<line x1="225.5" y1="384" x2="225.5" y2="508" stroke="#778899" stroke-dasharray="3 3" stroke-dashoffset="0"/>
<line x1="257.5" y1="384" x2="257.5" y2="508" stroke="#778899" stroke-dasharray="3 3" stroke-dashoffset="0"/>
<line x1="289.5" y1="384" x2="289.5" y2="508" stroke="#778899" stroke-dasharray="3 3" stroke-dashoffset="0"/>
<line x1="321.5" y1="384" x2="321.5" y2="508" stroke="#778899" stroke-dasharray="3 3" stroke-dashoffset="0"/>
<line x1="353.5" y1="384" x2="353.5" y2="508" stroke="#778899" stroke-dasharray="3 3" stroke-dashoffset="0"/>
<line x1="385.5" y1="384" x2="385.5" y2="508" stroke="#778899" stroke-dasharray="3 3" stroke-dashoffset="0"/>
<line x1="417.5" y1="384" x2="417.5" y2="508" stroke="#778899" stroke-dasharray="3 3" stroke-dashoffset="0"/>
<line x1="449.5" y1="384" x2="449.5" y2="508" stroke="#778899" stroke-dasharray="3 3" stroke-dashoffset="0"/>
<line x1="481.5" y1="384" x2="481.5" y2="508" stroke="#778899" stroke-dasharray="3 3" stroke-dashoffset="0"/>
<line x1="513.5" y1="384" x2="513.5" y2="508" stroke="#778899" stroke-dasharray="3 3" stroke-dashoffset="0"/>
<line x1="545.5" y1="384" x2="545.5" y2="508" stroke="#778899" stroke-dasharray="3 3" stroke-dashoffset="0"/>
<line x1="577.5" y1="384" x2="577.5" y2="508" stroke="#778899" stroke-dasharray="3 3" stroke-dashoffset="0"/>
<line x1="609.5" y1="384" x2="609.5" y2="508" stroke="#778899" stroke-dasharray="3 3" stroke-dashoffset="0"/>
<line x1="641.5" y1="384" x2="641.5" y2="508" stroke="#778899" stroke-dasharray="3 3" stroke-dashoffset="0"/>
<line x1="673.5" y1="384" x2="673.5" y2="508" stroke="#778899" stroke-dasharray="3 3" stroke-dashoffset="0"/>
<line x1="705.5" y1="384" x2="705.5" y2="508" stroke="#778899" stroke-dasharray="3 3" stroke-dashoffset="0"/>
<line x1="737.5" y1="384" x2="737.5" y2="508" stroke="#778899" stroke-dasharray="3 3" stroke-dashoffset="0"/>
<line x1="769.5" y1="384" x2="769.5" y2="508" stroke="#778899" stroke-dasharray="3 3" stroke-dashoffset="0"/>
<line x1="801.5" y1="384" x2="801.5" y2="508" stroke="#778899" stroke-dasharray="3 3" stroke-dashoffset="0"/>
<line x1="833.5" y1="384" x2="833.5" y2="508" stroke="#778899" stroke-dasharray="3 3" stroke-dashoffset="0"/>
<line x1="865.5" y1="384" x2="865.5" y2="508" stroke="#778899" stroke-dasharray="3 3" stroke-dashoffset="0"/>
<line x1="897.5" y1="384" x2="897.5" y2="508" stroke="#778899" stroke-dasharray="3 3" stroke-dashoffset="0"/>
<line x1="929.5" y1="384" x2="929.5" y2="508" stroke="#778899" stroke-dasharray="3 3" stroke-dashoffset="0"/>
<line x1="961.5" y1="384" x2="961.5" y2="508" stroke="#778899" stroke-dasharray="3 3" stroke-dashoffset="0"/>
<line x1="993.5" y1="384" x2="993.5" y2="508" stroke="#778899" stroke-dasharray="3 3" stroke-dashoffset="0"/>
<line x1="1025.5" y1="384" x2="1025.5" y2="508" stroke="#778899" stroke-dasharray="3 3" stroke-dashoffset="0"/>
<line x1="1057.5" y1="384" x2="1057.5" y2="508" stroke="#778899" stroke-dasharray="3 3" stroke-dashoffset="0"/>
<line x1="1089.5" y1="384" x2="1089.5" y2="508" stroke="#778899" stroke-dasharray="3 3" stroke-dashoffset="0"/>
<line x1="1121.5" y1="384" x2="1121.5" y2="508" stroke="#778899" stroke-dasharray="3 3" stroke-dashoffset="0"/>
<line x1="1153.5" y1="384" x2="1153.5" y2="508" stroke="#778899" stroke-dasharray="3 3" stroke-dashoffset="0"/>
<line x1="1185.5" y1="384" x2="1185.5" y2="508" stroke="#778899" stroke-dasharray="3 3" stroke-dashoffset="0"/>
<line x1="1217.5" y1="384" x2="1217.5" y2="508" stroke="#778899" stroke-dasharray="3 3" stroke-dashoffset="0"/>
<line x1="1249.5" y1="384" x2="1249.5" y2="508" stroke="#778899" stroke-dasharray="3 3" stroke-dashoffset="0"/>
<line x1="1281.5" y1="384" x2="1281.5" y2="508" stroke="#778899" stroke-dasharray="3 3" stroke-dashoffset="0"/>
<line x1="1313.5" y1="384" x2="1313.5" y2="508" stroke="#778899" stroke-dasharray="3 3" stroke-dashoffset="0"/>
</g>
<g id="bwk">
<path d="M2 469.5h162M164 468.5h6M170 467.5h5M175 466.5h53M228 467.5h5M233 468.5h6M239 469.5h85M324 468.5h6M330 467.5h5M335 466.5h21M356 467.5h5M361 468.5h6M367 469.5h5M372 468.5h6M378 467.5h5M383 466.5h69M452 467.5h5M457 468.5h6M463 469.5h21M484 468.5h6M490 467.5h5M495 466.5h5M500 467.5h5M505 468.5h6M511 469.5h133M644 468.5h6M650 467.5h5M655 466.5h53M708 467.5h5M713 468.5h6M719 469.5h197M916 468.5h6M922 467.5h5M927 466.5h5M932 467.5h5M937 468.5h6M943 469.5h69M1012 468.5h6M1018 467.5h5M1023 466.5h69M1092 467.5h5M1097 468.5h6M1103 469.5h83" fill="none" stroke="#ffb6c1" stroke-width="1"/>
<line x1="1" y1="469.5" x2="1322" y2="469.5" stroke="#778899" stroke-dasharray="3 3" stroke-dashoffset="0"/>
<path d="M2 497.5h3M8 497.5h3M14 497.5h3M20 497.5h3M26 497.5h3M32 497.5h3M38 497.5h3M44 497.5h3M50 497.5h3M56 497.5h3M62 497.5h3M68 497.5h3M74 497.5h3M80 497.5h3M86 497.5h3M92 497.5h3M98 497.5h3M104 497.5h3M110 497.5h3M116 497.5h3M122 497.5h3M128 497.5h3M134 497.5h3M140 497.5h3M146 497.5h3M152 497.5h3M158 497.5h3M163.5 493v2M164.5 492v1M166.5 487v2M167.5 486v1M169.5 482v1M170.5 480v2M172.5 476v1M173.5 474v2M175.5 470v1M176.5 468v2M180 466.5h2M182.5 465v1M186 464.5h3M192 462.5h3M198 461.5h3M204 460.5h3M210 459.5h2M212.5 458v1M216 457.5h3M222 456.5h2M224.5 455v1M228 455.5h3M234 455.5h3M240 455.5h3M246 455.5h3M252 455.5h3M258 455.5h3M264 455.5h3M270 455.5h3M276 455.5h3M282 455.5h3M288 455.5h3M294 455.5h3M300 455.5h3M306 455.5h3M312 455.5h3M318 455.5h3M324 454.5h3M330 453.5h3M336 452.5h3M342 451.5h2M344.5 450v1M348 449.5h3M354 448.5h3M360 448.5h3M366 448.5h3M372 447.5h3M378 446.5h2M380.5 445v1M384 444.5h3M390 443.5h3M396 442.5h3M402 441.5h2M404.5 440v1M408 440.5h2M410.5 439v1M414.5 439v1M415 438.5h2M420 437.5h3M426 436.5h2M428.5 435v1M432 434.5h3M438 433.5h2M440.5 432v1M444 431.5h3M450 430.5h3M456 430.5h3M462 430.5h3M468 430.5h3M474 430.5h3M480 430.5h3M486 429.5h3M492 428.5h3M498 427.5h3M504 427.5h3M510 427.5h3M516 427.5h3M522 427.5h3M528 427.5h3M534 427.5h3M540 427.5h3M546 427.5h3M552 427.5h3M558 427.5h3M564 427.5h3M570 427.5h3M576 427.5h3M582 427.5h3M588 427.5h3M594 427.5h3M600 427.5h3M606 427.5h3M612 427.5h3M618 427.5h3M624 427.5h3M630 427.5h3M636 427.5h3M642 427.5h2M644.5 426v1M648 425.5h3M654 424.5h2M656.5 423v1M660 422.5h3M666 421.5h3M672 420.5h3M678 419.5h2M680.5 418v1M684 417.5h3M690 416.5h2M692.5 415v1M696 415.5h2M698.5 414v1M702.5 414v1M703 413.5h2M708 413.5h3M714 413.5h3M720 413.5h3M726 413.5h3M732 413.5h3M738 413.5h3M744 413.5h3M750 413.5h3M756 413.5h3M762 413.5h3M768 413.5h3M774 413.5h3M780 413.5h3M786 413.5h3M792 413.5h3M798 413.5h3M804 413.5h3M810 413.5h3M816 413.5h3M822 413.5h3M828 413.5h3M834 413.5h3M840 413.5h3M846 413.5h3M852 413.5h3M858 413.5h3M864 413.5h3M870 413.5h3M876 413.5h3M882 413.5h3M888 413.5h3M894 413.5h3M900 413.5h3M906 413.5h3M912 413.5h3M918 412.5h2M920.5 411v1M924 410.5h3M930 409.5h3M936 409.5h3M942 409.5h3M948 409.5h3M954 409.5h3M960 409.5h3M966 409.5h3M972 409.5h3M978 409.5h3M984 409.5h3M990 409.5h3M996 409.5h3M1002 409.5h3M1008 409.5h3M1014 408.5h3M1020 408.5h2M1022.5 407v1M1026 407.5h2M1028.5 406v1M1032 405.5h3M1038 404.5h2M1040.5 403v1M1044 402.5h3M1050 401.5h2M1052.5 400v1M1056 399.5h3M1062 398.5h2M1064.5 397v1M1068 396.5h3M1074 395.5h2M1076.5 394v1M1080 394.5h2M1082.5 393v1M1086.5 393v1M1087 392.5h2M1092 392.5h3M1098 392.5h3M1104 392.5h3M1110 392.5h3M1116 392.5h3M1122 392.5h3M1128 392.5h3M1134 392.5h3M1140 392.5h3M1146 392.5h3M1152 392.5h3M1158 392.5h3M1164 392.5h3M1170 392.5h3M1176 392.5h3M1182 392.5h3" fill="none" stroke="#00ff00" stroke-width="1"/>
</g>
<g id="frame" fill="#fff">
<rect x="1" y="0" width="1322" height="1" fill="#fff"/>
<rect x="1" y="252" width="1322" height="1" fill="#fff"/>
<rect x="1" y="0" width="1" height="253" fill="#fff"/>
<rect x="1322" y="0" width="1" height="253" fill="#fff"/>
<rect x="1" y="254" width="1322" height="1" fill="#fff"/>
<rect x="1" y="378" width="1322" height="1" fill="#fff"/>
<rect x="1" y="254" width="1" height="125" fill="#fff"/>
<rect x="1322" y="254" width="1" height="125" fill="#fff"/>
<rect x="1" y="380" width="1322" height="1" fill="#fff"/>
<rect x="1" y="508" width="1322" height="1" fill="#fff"/>
<rect x="1" y="380" width="1" height="129" fill="#fff"/>
<rect x="1322" y="380" width="1" height="129" fill="#fff"/>
<rect x="1323" y="61" width="4" height="1" fill="#fff"/>
<rect x="1323" y="93" width="4" height="1" fill="#fff"/>
<rect x="1323" y="125" width="4" height="1" fill="#fff"/>
<rect x="1323" y="157" width="4" height="1" fill="#fff"/>
<rect x="1323" y="189" width="4" height="1" fill="#fff"/>
<rect x="1323" y="221" width="4" height="1" fill="#fff"/>
<rect x="1323" y="255" width="4" height="1" fill="#fff"/>
<rect x="1323" y="377" width="4" height="1" fill="#fff"/>
<rect x="1323" y="381" width="4" height="1" fill="#fff"/>
<rect x="1323" y="469" width="4" height="1" fill="#fff"/>
<rect x="1323" y="507" width="4" height="1" fill="#fff"/>
<rect x="1" y="509" width="1" height="4" fill="#fff"/>
<rect x="65" y="509" width="1" height="4" fill="#fff"/>
<rect x="129" y="509" width="1" height="4" fill="#fff"/>
<rect x="193" y="509" width="1" height="4" fill="#fff"/>
<rect x="257" y="509" width="1" height="4" fill="#fff"/>
<rect x="321" y="509" width="1" height="4" fill="#fff"/>
<rect x="385" y="509" width="1" height="4" fill="#fff"/>
<rect x="449" y="509" width="1" height="4" fill="#fff"/>
<rect x="513" y="509" width="1" height="4" fill="#fff"/>
<rect x="577" y="509" width="1" height="4" fill="#fff"/>
<rect x="641" y="509" width="1" height="4" fill="#fff"/>
<rect x="705" y="509" width="1" height="4" fill="#fff"/>
<rect x="769" y="509" width="1" height="4" fill="#fff"/>
<rect x="833" y="509" width="1" height="4" fill="#fff"/>
<rect x="897" y="509" width="1" height="4" fill="#fff"/>
<rect x="961" y="509" width="1" height="4" fill="#fff"/>
<rect x="1025" y="509" width="1" height="4" fill="#fff"/>
<rect x="1089" y="509" width="1" height="4" fill="#fff"/>
<rect x="1153" y="509" width="1" height="4" fill="#fff"/>
<rect x="1217" y="509" width="1" height="4" fill="#fff"/>
<rect x="1281" y="509" width="1" height="4" fill="#fff"/>
</g>
<rect x="1325" y="22" width="38" height="11" fill="#778899"/>
<rect x="1323" y="29" width="2" height="1" fill="#fff"/>
<g id="labels" font-family="Liberation Sans, Arial, sans-serif" shape-rendering="auto" text-rendering="geometricPrecision" stroke="#fff" stroke-width="0.1">
<rect x="2" y="255" width="225" height="15" fill="#000"/>
<rect x="2" y="381" width="107" height="18" fill="#000"/>
<text x="5.5" y="11" font-size="9.6" fill="#fff" textLength="60" lengthAdjust="spacingAndGlyphs" xml:space="preserve">USDJPY-,M15</text>
<text x="72.5" y="11" font-size="9.6" fill="#fff" textLength="31.5" lengthAdjust="spacingAndGlyphs" xml:space="preserve">154.221</text>
<text x="108.5" y="11" font-size="9.6" fill="#fff" textLength="31.5" lengthAdjust="spacingAndGlyphs" xml:space="preserve">154.224</text>
<text x="144.5" y="11" font-size="9.6" fill="#fff" textLength="31.5" lengthAdjust="spacingAndGlyphs" xml:space="preserve">154.174</text>
<text x="180.5" y="11" font-size="9.6" fill="#fff" textLength="31.5" lengthAdjust="spacingAndGlyphs" xml:space="preserve">154.177</text>
<text x="32" y="47" font-size="23.5" fill="#fff" textLength="278.2" lengthAdjust="spacingAndGlyphs" stroke="none" xml:space="preserve">OTR2515 active, ef = 1.62</text>
<text x="6.5" y="86" font-size="9.6" fill="#fff" textLength="86.5" lengthAdjust="spacingAndGlyphs" xml:space="preserve">BUY 0.01 at 153.856</text>
<text x="7" y="204" font-size="9.6" fill="#fff" textLength="81" lengthAdjust="spacingAndGlyphs" xml:space="preserve">SL for -627, -0.41%</text>
<text x="5" y="267" font-size="9.6" fill="#fff" textLength="220" lengthAdjust="spacingAndGlyphs" xml:space="preserve">OBV 817564 Bands(21) 815367.3 816788.4 813946.1</text>
<text x="5" y="393" font-size="9.6" fill="#fff" textLength="102" lengthAdjust="spacingAndGlyphs" xml:space="preserve">BWKenv 0.0000 22.0000</text>
<text x="1328" y="65" font-size="9.6" fill="#fff" textLength="32.5" lengthAdjust="spacingAndGlyphs" xml:space="preserve">154.000</text>
<text x="1328" y="97" font-size="9.6" fill="#fff" textLength="32.5" lengthAdjust="spacingAndGlyphs" xml:space="preserve">153.830</text>
<text x="1328" y="129" font-size="9.6" fill="#fff" textLength="32.5" lengthAdjust="spacingAndGlyphs" xml:space="preserve">153.660</text>
<text x="1328" y="161" font-size="9.6" fill="#fff" textLength="32.5" lengthAdjust="spacingAndGlyphs" xml:space="preserve">153.490</text>
<text x="1328" y="193" font-size="9.6" fill="#fff" textLength="32.5" lengthAdjust="spacingAndGlyphs" xml:space="preserve">153.320</text>
<text x="1328" y="225" font-size="9.6" fill="#fff" textLength="32.5" lengthAdjust="spacingAndGlyphs" xml:space="preserve">153.150</text>
<text x="1328" y="31" font-size="9.6" fill="#000" textLength="32.5" lengthAdjust="spacingAndGlyphs" stroke="#000" xml:space="preserve">154.177</text>
<text x="1328" y="263" font-size="9.6" fill="#fff" textLength="29.5" lengthAdjust="spacingAndGlyphs" xml:space="preserve">818713</text>
<text x="1328" y="376" font-size="9.6" fill="#fff" textLength="29.5" lengthAdjust="spacingAndGlyphs" xml:space="preserve">809852</text>
<text x="1328" y="389" font-size="9.6" fill="#fff" textLength="32.5" lengthAdjust="spacingAndGlyphs" xml:space="preserve">25.1500</text>
<text x="1328" y="473" font-size="9.6" fill="#fff" textLength="27.5" lengthAdjust="spacingAndGlyphs" xml:space="preserve">0.0000</text>
<text x="1328" y="506" font-size="9.6" fill="#fff" textLength="36" lengthAdjust="spacingAndGlyphs" xml:space="preserve">-11.1500</text>
<text x="1" y="521" font-size="9.6" fill="#fff" textLength="48" lengthAdjust="spacingAndGlyphs" xml:space="preserve">7 Nov 2025</text>
<text x="65" y="521" font-size="9.6" fill="#fff" textLength="51" lengthAdjust="spacingAndGlyphs" xml:space="preserve">7 Nov 19:45</text>
<text x="129" y="521" font-size="9.6" fill="#fff" textLength="51" lengthAdjust="spacingAndGlyphs" xml:space="preserve">7 Nov 20:45</text>
<text x="193" y="521" font-size="9.6" fill="#fff" textLength="51" lengthAdjust="spacingAndGlyphs" xml:space="preserve">7 Nov 21:45</text>
<text x="257" y="521" font-size="9.6" fill="#fff" textLength="51" lengthAdjust="spacingAndGlyphs" xml:space="preserve">7 Nov 22:45</text>
<text x="321" y="521" font-size="9.6" fill="#fff" textLength="51" lengthAdjust="spacingAndGlyphs" xml:space="preserve">7 Nov 23:45</text>
<text x="385" y="521" font-size="9.6" fill="#fff" textLength="55.5" lengthAdjust="spacingAndGlyphs" xml:space="preserve">10 Nov 00:45</text>
<text x="449" y="521" font-size="9.6" fill="#fff" textLength="55.5" lengthAdjust="spacingAndGlyphs" xml:space="preserve">10 Nov 01:45</text>
<text x="513" y="521" font-size="9.6" fill="#fff" textLength="55.5" lengthAdjust="spacingAndGlyphs" xml:space="preserve">10 Nov 02:45</text>
<text x="577" y="521" font-size="9.6" fill="#fff" textLength="55.5" lengthAdjust="spacingAndGlyphs" xml:space="preserve">10 Nov 03:45</text>
<text x="641" y="521" font-size="9.6" fill="#fff" textLength="55.5" lengthAdjust="spacingAndGlyphs" xml:space="preserve">10 Nov 04:45</text>
<text x="705" y="521" font-size="9.6" fill="#fff" textLength="55.5" lengthAdjust="spacingAndGlyphs" xml:space="preserve">10 Nov 05:45</text>
<text x="769" y="521" font-size="9.6" fill="#fff" textLength="55.5" lengthAdjust="spacingAndGlyphs" xml:space="preserve">10 Nov 06:45</text>
<text x="833" y="521" font-size="9.6" fill="#fff" textLength="55.5" lengthAdjust="spacingAndGlyphs" xml:space="preserve">10 Nov 07:45</text>
<text x="897" y="521" font-size="9.6" fill="#fff" textLength="55.5" lengthAdjust="spacingAndGlyphs" xml:space="preserve">10 Nov 08:45</text>
<text x="961" y="521" font-size="9.6" fill="#fff" textLength="55.5" lengthAdjust="spacingAndGlyphs" xml:space="preserve">10 Nov 09:45</text>
<text x="1025" y="521" font-size="9.6" fill="#fff" textLength="55.5" lengthAdjust="spacingAndGlyphs" xml:space="preserve">10 Nov 10:45</text>
<text x="1089" y="521" font-size="9.6" fill="#fff" textLength="55.5" lengthAdjust="spacingAndGlyphs" xml:space="preserve">10 Nov 11:45</text>
<text x="1153" y="521" font-size="9.6" fill="#fff" textLength="55.5" lengthAdjust="spacingAndGlyphs" xml:space="preserve">10 Nov 12:45</text>
</g>
<rect x="1363" y="0" width="4" height="532" fill="#fff"/>
<rect x="0" y="529" width="1367" height="1" fill="#fff"/>
<rect x="0" y="530" width="1363" height="2" fill="#f0f0f0"/>
</svg>
</body></html>
